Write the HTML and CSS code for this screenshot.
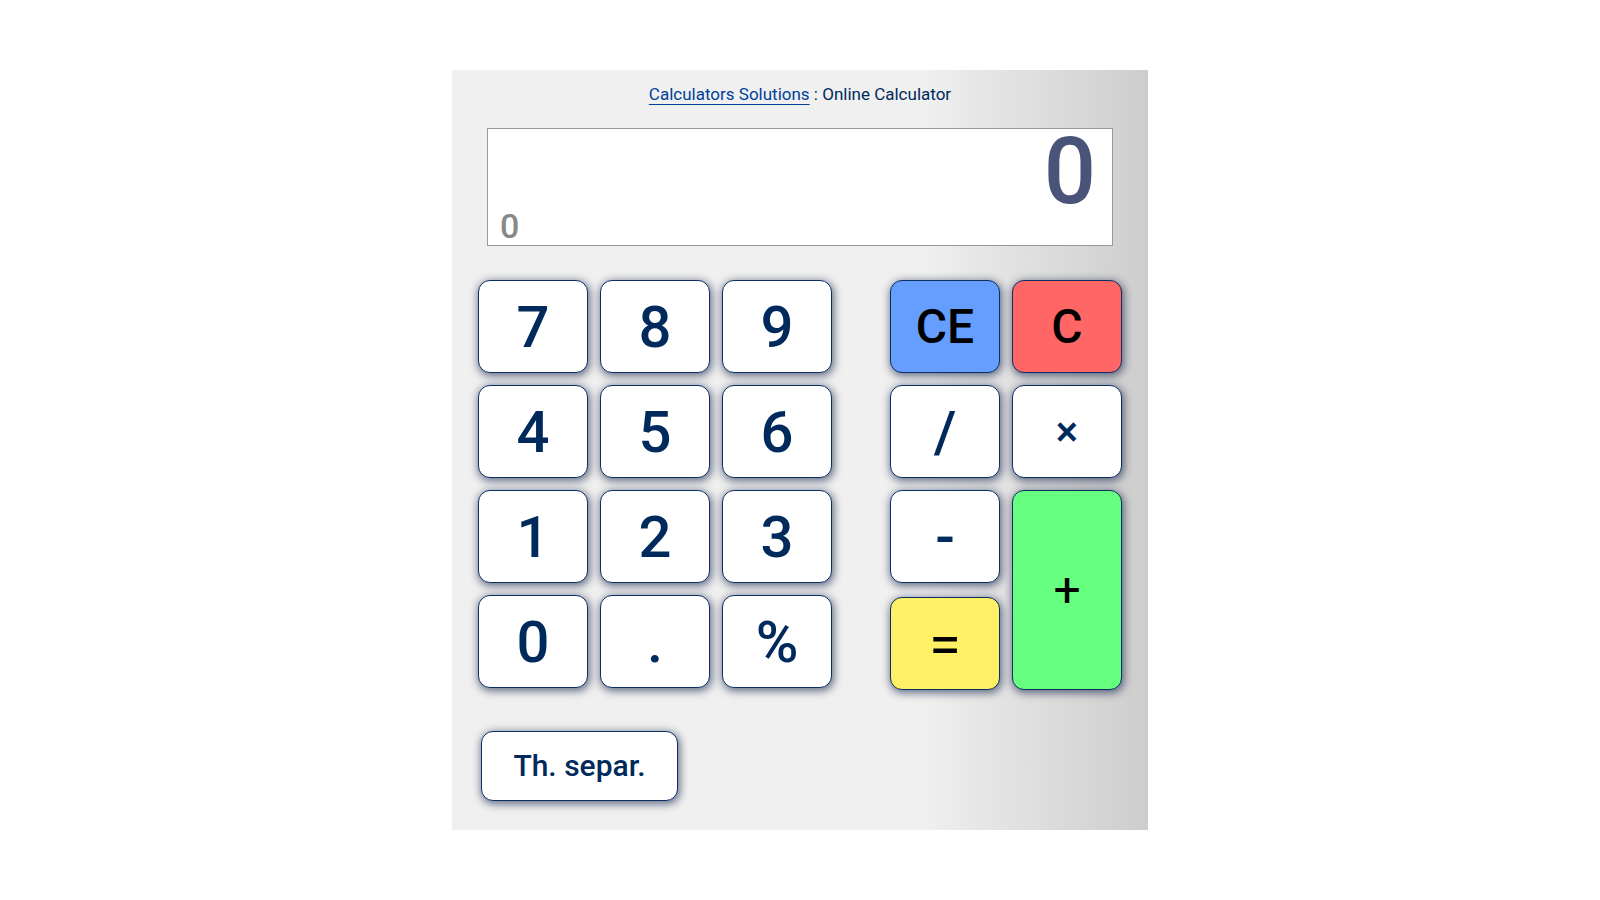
FILE: index.html
```
<!DOCTYPE html>
<html lang="en">
<head>
    <meta charset="UTF-8">
    <meta name="viewport" content="width=device-width, initial-scale=1.0">
    <title>Online Calculator</title>
    <link rel="stylesheet" href="styles.css">
</head>
<body>
<main class="calculator">
    <h1 class="title"><a href="index.html">Calculators Solutions</a> : Online Calculator</h1>

    <div class="display">
        <input type="text" class="result" value="0" aria-label="Result" readonly>
        <output class="memory">0</output>
    </div>

    <div class="keys">
        <div class="digits">
            <button type="button">7</button>
            <button type="button">8</button>
            <button type="button">9</button>
            <button type="button">4</button>
            <button type="button">5</button>
            <button type="button">6</button>
            <button type="button">1</button>
            <button type="button">2</button>
            <button type="button">3</button>
            <button type="button">0</button>
            <button type="button">.</button>
            <button type="button">%</button>
        </div>
        <div class="operators">
            <button type="button" class="clear-entry">CE</button>
            <button type="button" class="clear">C</button>
            <button type="button">/</button>
            <button type="button" class="times">×</button>
            <button type="button">-</button>
            <button type="button" class="plus">+</button>
            <button type="button" class="equals">=</button>
        </div>
    </div>

    <button type="button" class="separator">Th. separ.</button>
</main>
</body>
</html>
```
FILE: styles.css
```
body {
    margin: 0;
    background-color: white;
    font-family: Roboto, sans-serif;
    color: #002a5c;
}

button,
input {
    font-family: inherit;
}

.calculator {
    box-sizing: border-box;
    max-width: 696px;
    margin: 70px auto;
    padding: 12px 26px 29px;
    background: linear-gradient(to right, #f0f0f0 68%, #e8e8e8 74%, #dfdfdf 83%, #cdcdcd);
}

.title {
    margin: 0 0 22px;
    font-size: 17px;
    line-height: 24px;
    font-weight: 400;
    text-align: center;
}

.title a {
    color: #00409a;
    text-underline-offset: 4px;
}

.display {
    box-sizing: border-box;
    height: 118px;
    margin: 0 9px 34px;
    padding: 0 16px 0 12px;
    border: 1px solid #999;
    background-color: white;
}

.result {
    display: block;
    box-sizing: border-box;
    width: 100%;
    height: 80px;
    padding: 4px 0 0;
    border: 0;
    outline: 0;
    background: none;
    color: #4a5478;
    font-size: 92px;
    font-weight: 500;
    text-align: right;
}

.memory {
    display: block;
    color: #888;
    font-size: 34px;
    line-height: 34px;
    font-weight: 500;
}

.keys {
    display: flex;
    justify-content: space-between;
    margin-bottom: 41px;
}

.digits,
.operators {
    display: grid;
    grid-template-columns: repeat(3, 110px);
    grid-template-rows: repeat(4, 93px);
    gap: 12px;
}

.operators {
    grid-template-columns: repeat(2, 110px);
    grid-template-rows: repeat(3, 93px) 95px;
}

button {
    padding: 0;
    border: 1px solid #0b2f63;
    border-radius: 12px;
    background-color: white;
    box-shadow: 1px 2px 9px 1px rgba(0, 20, 60, 0.6);
    color: #002a5c;
    font-size: 58px;
    line-height: 72px;
    font-weight: 500;
    cursor: pointer;
}

.clear-entry,
.clear,
.plus {
    color: black;
    font-size: 48px;
}

.clear-entry {
    background-color: #669eff;
}

.clear {
    background-color: #ff6666;
}

.times {
    font-size: 42px;
}

.plus {
    grid-row: 3 / 5;
    grid-column: 2;
    background-color: #66ff80;
    font-weight: 400;
}

.equals {
    align-self: end;
    height: 93px;
    background-color: #fff066;
    color: black;
    font-weight: 400;
}

.separator {
    display: block;
    width: 197px;
    height: 70px;
    margin-left: 3px;
    font-size: 30px;
    line-height: 40px;
}
```
